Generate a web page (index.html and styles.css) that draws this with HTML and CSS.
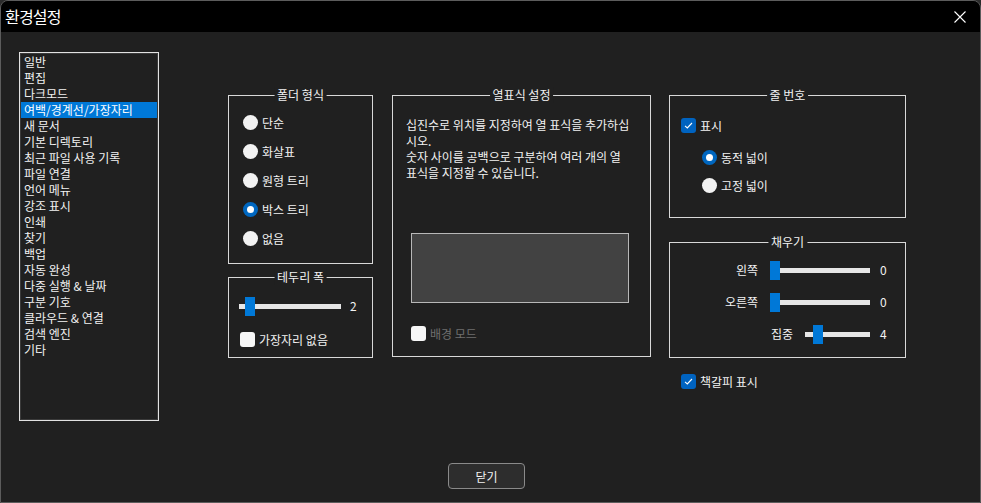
FILE: index.html
```html
<!DOCTYPE html>
<html>
  <head>
    <title>환경설정</title>
    <link rel="stylesheet" href="styles.css">
  </head>
  <body>
    <div class="window">
      <div class="titlebar">
        <span class="title">환경설정</span>
        <svg class="close-x" width="12" height="12" viewBox="0 0 12 12">
          <path d="M0.5 0.5 L11.5 11.5 M11.5 0.5 L0.5 11.5" stroke="#ffffff" stroke-width="1.1" fill="none"/>
        </svg>
      </div>

      <div class="content">
        <div class="main">
          <ul class="nav">
            <li>일반</li>
            <li>편집</li>
            <li>다크모드</li>
            <li class="selected">여백/경계선/가장자리</li>
            <li>새 문서</li>
            <li>기본 디렉토리</li>
            <li>최근 파일 사용 기록</li>
            <li>파일 연결</li>
            <li>언어 메뉴</li>
            <li>강조 표시</li>
            <li>인쇄</li>
            <li>찾기</li>
            <li>백업</li>
            <li>자동 완성</li>
            <li>다중 실행 &amp; 날짜</li>
            <li>구분 기호</li>
            <li>클라우드 &amp; 연결</li>
            <li>검색 엔진</li>
            <li>기타</li>
          </ul>

          <div class="col col-folder">
            <div class="group group-folder">
              <span class="legend">폴더 형식</span>
              <div class="radio-row"><span class="radio"></span>단순</div>
              <div class="radio-row"><span class="radio"></span>화살표</div>
              <div class="radio-row"><span class="radio"></span>원형 트리</div>
              <div class="radio-row"><span class="radio checked"></span>박스 트리</div>
              <div class="radio-row"><span class="radio"></span>없음</div>
            </div>

            <div class="group group-border">
              <span class="legend">테두리 폭</span>
              <div class="slider-row">
                <div class="slider slider-border">
                  <div class="slider-track"></div>
                  <div class="slider-thumb" style="left: 6px;"></div>
                </div>
                <span class="slider-value">2</span>
              </div>
              <div class="check-row"><span class="checkbox"></span>가장자리 없음</div>
            </div>
          </div>

          <div class="col col-marks">
            <div class="group group-marks">
              <span class="legend">열표식 설정</span>
              <p class="help">
                십진수로 위치를 지정하여 열 표식을 추가하십<br>
                시오.<br>
                숫자 사이를 공백으로 구분하여 여러 개의 열<br>
                표식을 지정할 수 있습니다.
              </p>
              <div class="marks-box"></div>
              <div class="check-row disabled"><span class="checkbox"></span>배경 모드</div>
            </div>
          </div>

          <div class="col col-lines">
            <div class="group group-lines">
              <span class="legend">줄 번호</span>
              <div class="check-row">
                <span class="checkbox checked">
                  <svg width="15" height="15" viewBox="0 0 15 15"><path d="M4 7.8 L6.3 10 L11 5" stroke="#ffffff" stroke-width="1.1" fill="none"/></svg>
                </span>표시
              </div>
              <div class="radio-row sub"><span class="radio checked"></span>동적 넓이</div>
              <div class="radio-row sub"><span class="radio"></span>고정 넓이</div>
            </div>

            <div class="group group-pad">
              <span class="legend">채우기</span>
              <div class="pad-row">
                <span class="pad-label">왼쪽</span>
                <div class="slider slider-wide">
                  <div class="slider-track"></div>
                  <div class="slider-thumb" style="left: 0px;"></div>
                </div>
                <span class="pad-value">0</span>
              </div>
              <div class="pad-row">
                <span class="pad-label">오른쪽</span>
                <div class="slider slider-wide">
                  <div class="slider-track"></div>
                  <div class="slider-thumb" style="left: 0px;"></div>
                </div>
                <span class="pad-value">0</span>
              </div>
              <div class="pad-row">
                <span class="pad-label">집중</span>
                <div class="slider slider-short">
                  <div class="slider-track"></div>
                  <div class="slider-thumb" style="left: 8px;"></div>
                </div>
                <span class="pad-value">4</span>
              </div>
            </div>

            <div class="check-row bookmark">
              <span class="checkbox checked">
                <svg width="15" height="15" viewBox="0 0 15 15"><path d="M4 7.8 L6.3 10 L11 5" stroke="#ffffff" stroke-width="1.1" fill="none"/></svg>
              </span>책갈피 표시
            </div>
          </div>
        </div>

        <div class="footer">
          <button class="close-button">닫기</button>
        </div>
      </div>
    </div>
  </body>
</html>
```

FILE: styles.css
```css
html, body {
  margin: 0;
  padding: 0;
  background-color: #2b2b2b;
}

body {
  width: 981px;
  height: 503px;
  overflow: hidden;
  font-family: "Noto Sans CJK KR", "Noto Sans", sans-serif;
  font-size: 12px;
  color: #f2f2f2;
}

.window {
  box-sizing: border-box;
  width: 981px;
  height: 503px;
  border: 1px solid #5c5c5c;
  border-radius: 8px 8px 0 0;
  background-color: #202020;
  overflow: hidden;
}

.titlebar {
  height: 31px;
  background-color: #000000;
  display: flex;
  align-items: center;
  justify-content: space-between;
  padding-left: 4px;
  padding-right: 14px;
}

.title {
  font-size: 16px;
  letter-spacing: -0.8px;
  line-height: 20px;
  color: #ffffff;
  margin-top: -1px;
}

.close-x {
  display: block;
}

.content {
  padding-top: 20px;
  padding-left: 18px;
}

.main {
  display: flex;
  align-items: flex-start;
}

/* category list */
.nav {
  list-style: none;
  margin: 0;
  padding: 1px 0;
  box-sizing: border-box;
  width: 140px;
  height: 369px;
  border: 1px solid #e2e2e2;
  box-shadow: inset 0 0 0 1px #3a3a3a;
}

.nav li {
  height: 16px;
  line-height: 16px;
  padding-left: 4px;
  white-space: nowrap;
}

.nav li.selected {
  background-color: #0078d7;
  color: #ffffff;
  margin: 0 1px;
  padding-left: 3px;
}

.col {
  margin-top: 43px;
  display: flex;
  flex-direction: column;
}

.col-folder {
  width: 145px;
  margin-left: 69px;
}

.col-marks {
  width: 259px;
  margin-left: 19px;
}

.col-lines {
  width: 237px;
  margin-left: 18px;
}

.group {
  position: relative;
  box-sizing: border-box;
  border: 1px solid #d8d8d8;
}

.legend {
  position: absolute;
  top: -9px;
  left: 50%;
  transform: translateX(-50%);
  padding: 0 3px;
  background-color: #202020;
  line-height: 16px;
  white-space: nowrap;
  color: #f2f2f2;
}

/* radios and checkboxes */
.radio-row {
  display: flex;
  align-items: center;
  height: 29px;
}

.radio {
  box-sizing: border-box;
  width: 15px;
  height: 15px;
  border-radius: 50%;
  background-color: #f2f2f2;
  margin-right: 4px;
  position: relative;
  flex-shrink: 0;
}

.radio.checked {
  background-color: #0067c0;
}

.radio.checked::after {
  content: "";
  position: absolute;
  left: 4px;
  top: 4px;
  width: 7px;
  height: 7px;
  border-radius: 50%;
  background-color: #ffffff;
}

.check-row {
  display: flex;
  align-items: center;
  height: 16px;
  white-space: nowrap;
}

.checkbox {
  box-sizing: border-box;
  width: 15px;
  height: 15px;
  border-radius: 3px;
  background-color: #f7f7f7;
  margin-right: 4px;
  flex-shrink: 0;
}

.checkbox svg {
  display: block;
}

.checkbox.checked {
  background-color: #0063c0;
}

.check-row.disabled {
  color: #6f6f6f;
}

/* sliders */
.slider {
  position: relative;
  height: 19px;
}

.slider-track {
  position: absolute;
  left: 0;
  right: 0;
  top: 7px;
  height: 5px;
  background-color: #e6e6e6;
}

.slider-thumb {
  position: absolute;
  top: 0;
  width: 10px;
  height: 19px;
  background-color: #0078d7;
}

/* 폴더 형식 */
.group-folder {
  height: 169px;
  padding-top: 12px;
  padding-left: 14px;
}

/* 테두리 폭 */
.group-border {
  height: 81px;
  margin-top: 13px;
  padding-top: 18px;
  padding-left: 10px;
}

.slider-row {
  display: flex;
  align-items: center;
  height: 20px;
}

.slider-border {
  width: 102px;
}

.slider-value {
  margin-left: 9px;
  line-height: 16px;
}

.group-border .check-row {
  margin-top: 15px;
  margin-left: 1px;
}

/* 열표식 설정 */
.group-marks {
  height: 262px;
  padding-top: 21px;
  padding-left: 13px;
}

.help {
  margin: 0;
  line-height: 16px;
  white-space: nowrap;
}

.marks-box {
  box-sizing: border-box;
  width: 218px;
  height: 70px;
  margin-top: 52px;
  margin-left: 5px;
  background-color: #424242;
  border: 1px solid #b8b8b8;
}

.group-marks .check-row {
  margin-top: 22px;
  margin-left: 5px;
}

/* 줄 번호 */
.group-lines {
  height: 123px;
  padding-top: 21px;
  padding-left: 11px;
}

.radio-row.sub {
  height: 28px;
  padding-left: 21px;
}

.group-lines .check-row + .radio-row {
  margin-top: 10px;
}

/* 채우기 */
.group-pad {
  height: 116px;
  margin-top: 24px;
  padding-top: 17px;
  padding-right: 11px;
}

.pad-row {
  display: flex;
  align-items: center;
  justify-content: flex-end;
  height: 20px;
  margin-bottom: 12px;
}

.pad-label {
  margin-right: 12px;
  line-height: 16px;
}

.slider-wide {
  width: 100px;
}

.slider-short {
  width: 65px;
}

.pad-value {
  width: 14px;
  padding-left: 10px;
  line-height: 16px;
}

.bookmark {
  margin-top: 15px;
  margin-left: 12px;
}

/* footer */
.footer {
  display: flex;
  justify-content: center;
  margin-top: 42px;
  padding-right: 26px;
}

.close-button {
  box-sizing: border-box;
  width: 77px;
  height: 26px;
  border: 1px solid #8a8a8a;
  border-radius: 4px;
  background-color: #2d2d2d;
  color: #f2f2f2;
  font-family: "Noto Sans CJK KR", "Noto Sans", sans-serif;
  font-size: 12px;
  padding: 0;
}
```
